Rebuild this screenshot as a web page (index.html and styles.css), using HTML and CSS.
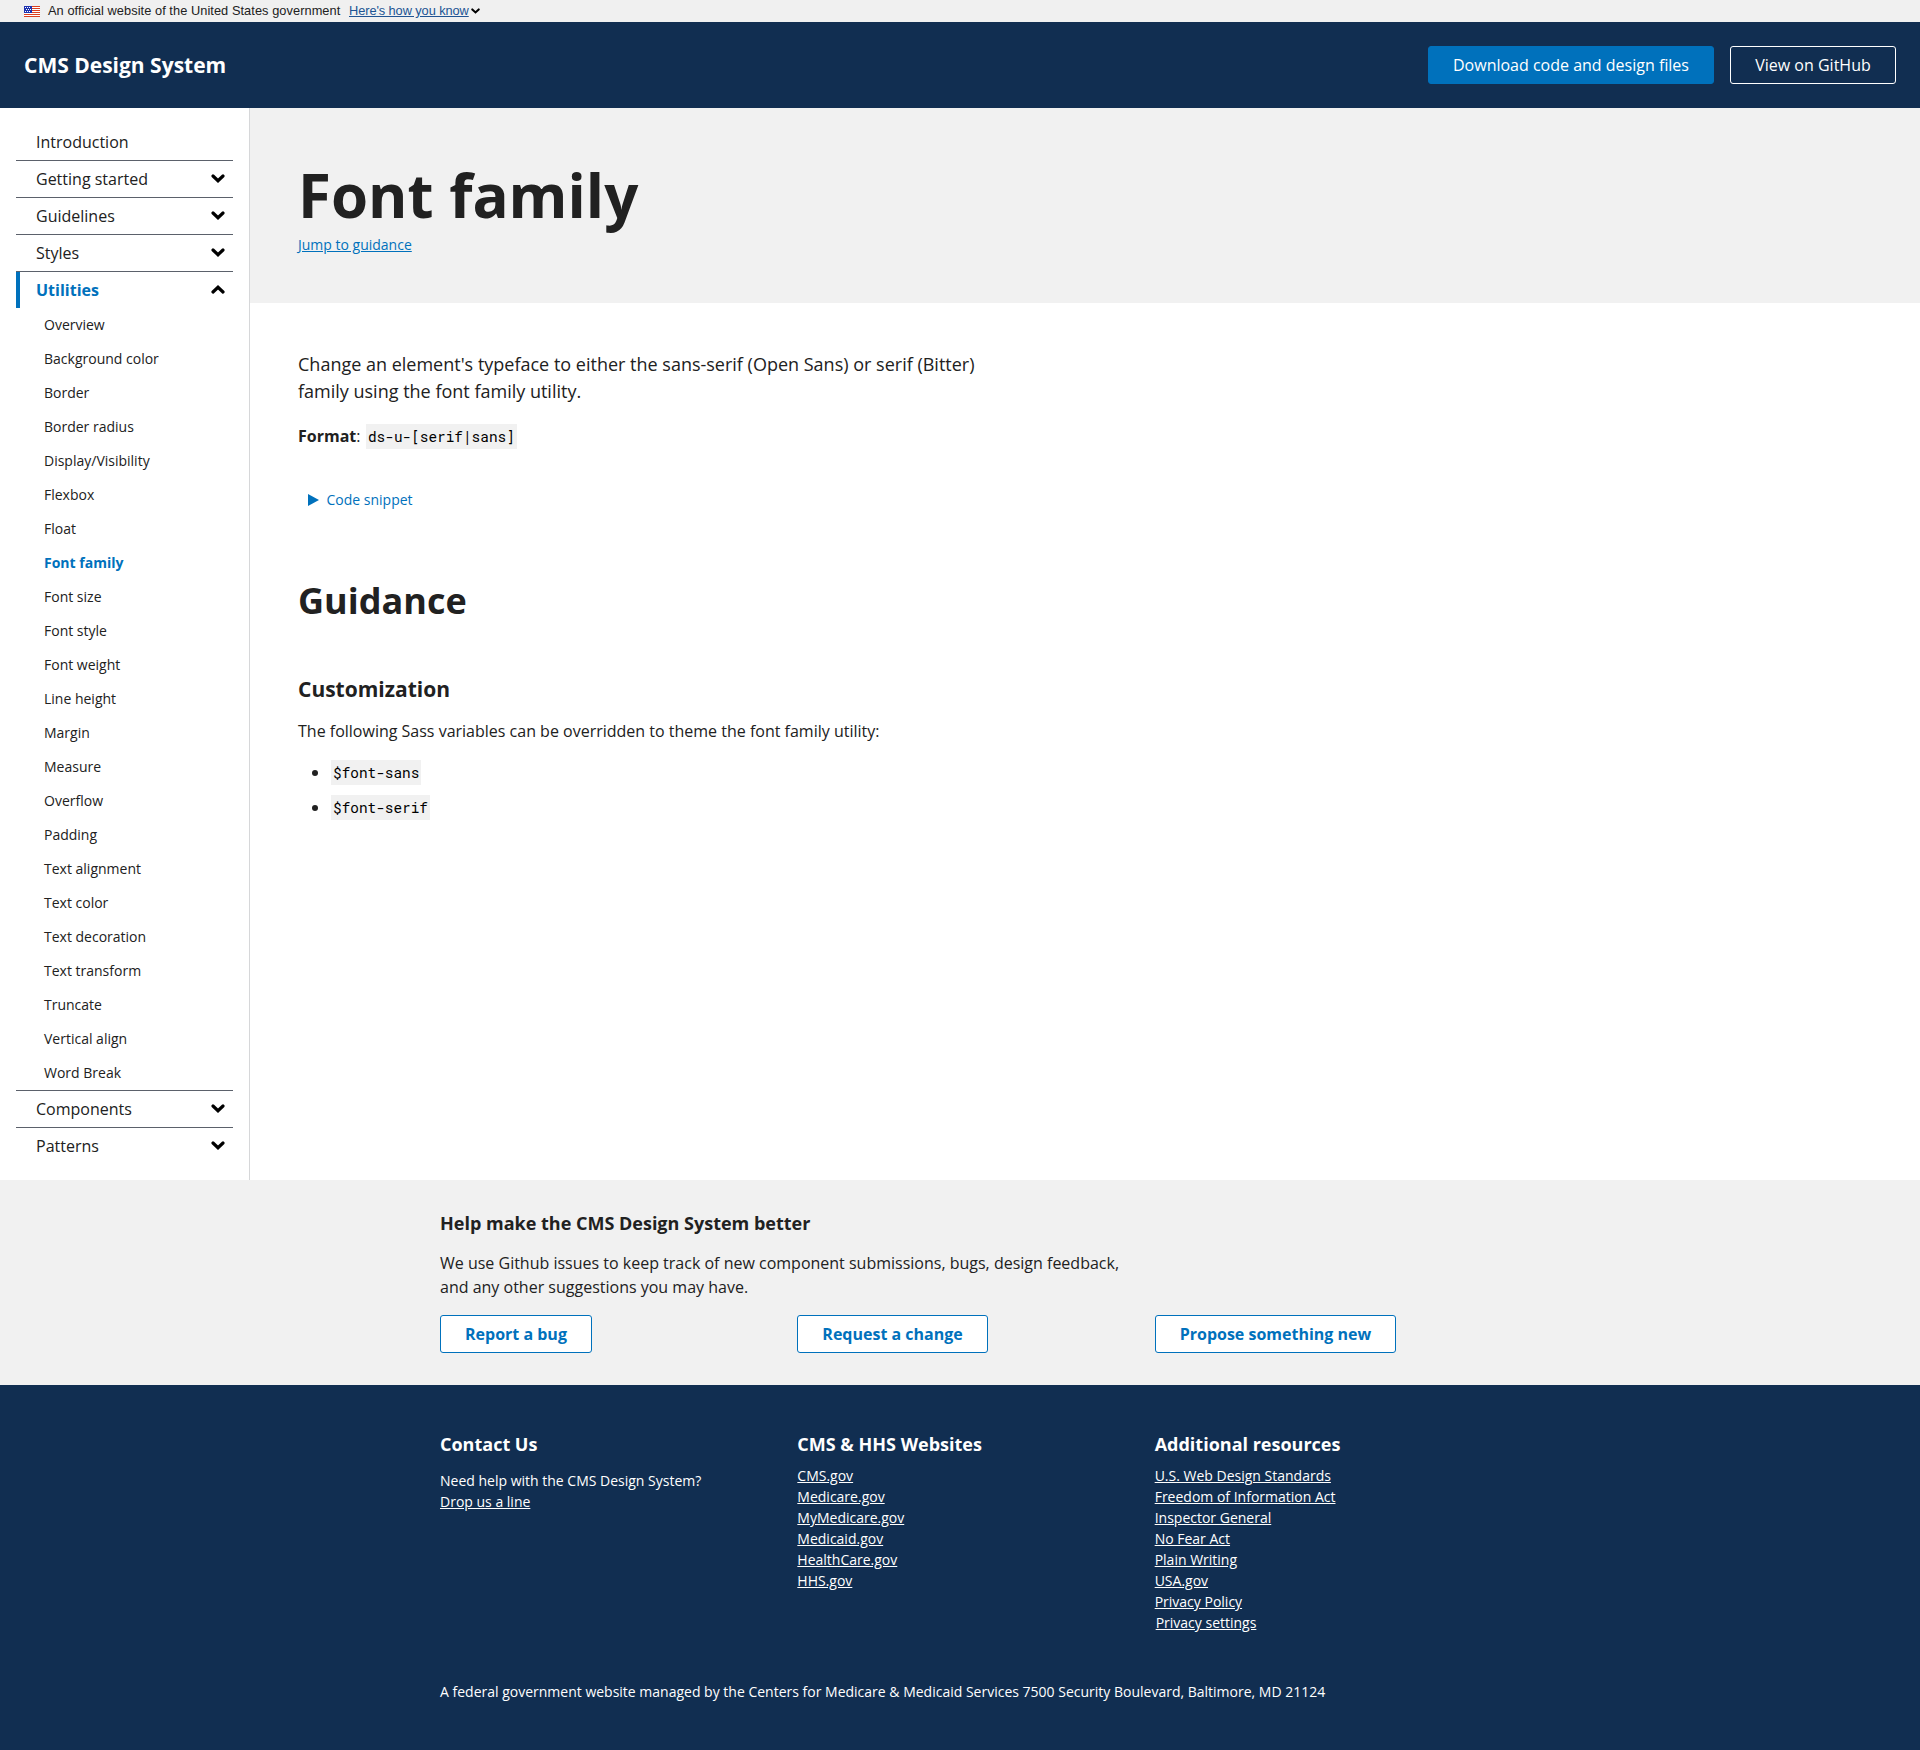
FILE: index.html
```html
<!DOCTYPE html>
<html lang="en">
<head>
<meta charset="utf-8">
<title>Font family - CMS Design System</title>
<link rel="stylesheet" href="styles.css">
</head>
<body>
<svg class="sprite" aria-hidden="true">
  <symbol id="chevron" viewBox="0 0 14 9"><path d="M2 2l5 4.7L12 2" fill="none" stroke="#000" stroke-width="3.2" stroke-linecap="round" stroke-linejoin="miter"/></symbol>
</svg>
<div class="banner">
  <svg class="flag" viewBox="0 0 16 11" shape-rendering="crispEdges">
    <path fill="#fff" d="M0 0h16v11H0z"/>
    <path fill="#db3e1f" d="M0 0h16v1H0zM0 2h16v1H0zM0 4h16v1H0zM0 6h16v1H0zM0 8h16v1H0zM0 10h16v1H0z"/>
    <path fill="#1e33b1" d="M0 0h8v7H0z"/>
    <path fill="#fff" d="M1 1h1v1H1zM3 1h1v1H3zM5 1h1v1H5zM2 3h1v1H2zM4 3h1v1H4zM6 3h1v1H6zM1 5h1v1H1zM3 5h1v1H3zM5 5h1v1H5z"/>
  </svg>
  <span class="banner-text">An official website of the United States government</span>
  <a class="banner-link" href="#">Here's how you know</a>
  <svg class="banner-chevron"><use href="#chevron"/></svg>
</div>
<header class="header">
  <a class="brand" href="#">CMS Design System</a>
  <div class="header-actions">
    <a class="button button-primary" href="#">Download code and design files</a>
    <a class="button button-inverse" href="#">View on GitHub</a>
  </div>
</header>
<div class="layout">
  <nav class="sidebar">
    <a class="nav-row" href="#">Introduction</a>
    <a class="nav-row" href="#">Getting started<svg class="chevron"><use href="#chevron"/></svg></a>
    <a class="nav-row" href="#">Guidelines<svg class="chevron"><use href="#chevron"/></svg></a>
    <a class="nav-row" href="#">Styles<svg class="chevron"><use href="#chevron"/></svg></a>
    <a class="nav-row current" href="#">Utilities<svg class="chevron up"><use href="#chevron"/></svg></a>
    <div class="subnav">
      <a href="#">Overview</a>
      <a href="#">Background color</a>
      <a href="#">Border</a>
      <a href="#">Border radius</a>
      <a href="#">Display/Visibility</a>
      <a href="#">Flexbox</a>
      <a href="#">Float</a>
      <a class="selected" href="#">Font family</a>
      <a href="#">Font size</a>
      <a href="#">Font style</a>
      <a href="#">Font weight</a>
      <a href="#">Line height</a>
      <a href="#">Margin</a>
      <a href="#">Measure</a>
      <a href="#">Overflow</a>
      <a href="#">Padding</a>
      <a href="#">Text alignment</a>
      <a href="#">Text color</a>
      <a href="#">Text decoration</a>
      <a href="#">Text transform</a>
      <a href="#">Truncate</a>
      <a href="#">Vertical align</a>
      <a href="#">Word Break</a>
    </div>
    <a class="nav-row" href="#">Components<svg class="chevron"><use href="#chevron"/></svg></a>
    <a class="nav-row" href="#">Patterns<svg class="chevron"><use href="#chevron"/></svg></a>
  </nav>
  <main class="main">
    <div class="hero">
      <h1>Font family</h1>
      <a href="#guidance">Jump to guidance</a>
    </div>
    <div class="content">
      <p class="lead">Change an element's typeface to either the sans-serif (Open Sans) or serif (Bitter) family using the font family utility.</p>
      <p class="format"><span><b>Format</b>:</span><code>ds-u-[serif|sans]</code></p>
      <a class="snippet" href="#"><svg class="triangle" viewBox="0 0 11 12"><path d="M0 0l11 6L0 12z" fill="#0071bc"/></svg>Code snippet</a>
      <h2 id="guidance">Guidance</h2>
      <h3>Customization</h3>
      <p class="body-text">The following Sass variables can be overridden to theme the font family utility:</p>
      <ul class="variables">
        <li><code>$font-sans</code></li>
        <li><code>$font-serif</code></li>
      </ul>
    </div>
  </main>
</div>
<section class="feedback">
  <h3>Help make the CMS Design System better</h3>
  <p>We use Github issues to keep track of new component submissions, bugs, design feedback, and any other suggestions you may have.</p>
  <div class="columns">
    <div><a class="button button-outline" href="#">Report a bug</a></div>
    <div><a class="button button-outline" href="#">Request a change</a></div>
    <div><a class="button button-outline" href="#">Propose something new</a></div>
  </div>
</section>
<footer class="footer">
  <div class="columns footer-columns">
    <div>
      <h3>Contact Us</h3>
      <p class="contact">Need help with the CMS Design System?<br><a href="#">Drop us a line</a></p>
    </div>
    <div>
      <h3>CMS &amp; HHS Websites</h3>
      <ul>
        <li><a href="#">CMS.gov</a></li>
        <li><a href="#">Medicare.gov</a></li>
        <li><a href="#">MyMedicare.gov</a></li>
        <li><a href="#">Medicaid.gov</a></li>
        <li><a href="#">HealthCare.gov</a></li>
        <li><a href="#">HHS.gov</a></li>
      </ul>
    </div>
    <div>
      <h3>Additional resources</h3>
      <ul>
        <li><a href="#">U.S. Web Design Standards</a></li>
        <li><a href="#">Freedom of Information Act</a></li>
        <li><a href="#">Inspector General</a></li>
        <li><a href="#">No Fear Act</a></li>
        <li><a href="#">Plain Writing</a></li>
        <li><a href="#">USA.gov</a></li>
        <li><a href="#">Privacy Policy</a></li>
        <li class="settings"><a href="#">Privacy settings</a></li>
      </ul>
    </div>
  </div>
  <p class="legal">A federal government website managed by the Centers for Medicare &amp; Medicaid Services 7500 Security Boulevard, Baltimore, MD 21124</p>
</footer>
</body>
</html>
```
FILE: styles.css
```css
* { box-sizing: border-box; }
body {
  margin: 0;
  background: #fff;
  color: #212121;
  font: 16px/24px "Open Sans", sans-serif;
}
h1, h2, h3, p, ul { margin: 0; padding: 0; }
h1, h2, h3 { font-weight: 700; line-height: 1.3; }
a { color: #0071bc; }
.sprite { display: none; }

.banner {
  display: flex;
  align-items: center;
  height: 22px;
  padding-left: 24px;
  background: #f0f0f0;
  font: 12.8px/22px "Liberation Sans", Arial, sans-serif;
}
.flag { width: 16px; height: 11px; margin-right: 8px; }
.banner-text { width: 301px; letter-spacing: 0.06px; white-space: nowrap; }
.banner-link { color: #205493; letter-spacing: -0.08px; }
.banner-chevron { width: 9px; height: 6px; margin: 0 0 0 2px; }

.header {
  display: flex;
  align-items: center;
  justify-content: space-between;
  height: 86px;
  padding: 0 24px;
  background: #112e51;
}
.brand { color: #fff; font-size: 21px; font-weight: 700; text-decoration: none; }
.header-actions { display: flex; gap: 16px; }
.button {
  display: inline-block;
  height: 38px;
  padding: 0 24px;
  border: 1px solid #0071bc;
  border-radius: 3px;
  line-height: 36px;
  text-align: center;
  text-decoration: none;
  white-space: nowrap;
}
.button-primary { min-width: 286px; background: #0071bc; color: #fff; }
.button-inverse { min-width: 166px; border-color: #fff; color: #fff; }
.button-outline { background: #fff; font-weight: 700; }

.layout { display: flex; height: 1072px; }
.sidebar { width: 250px; padding: 16px; border-right: 1px solid #d6d7d9; }
.nav-row {
  display: flex;
  align-items: center;
  justify-content: space-between;
  height: 37px;
  padding: 0 8px 0 20px;
  border-top: 1px solid #5b616b;
  color: #212121;
  text-decoration: none;
}
.nav-row:first-child { height: 36px; border-top: 0; }
.nav-row.current {
  background: linear-gradient(#0071bc, #0071bc) left / 4px 100% no-repeat;
  color: #0071bc;
  font-weight: 700;
}
.chevron { width: 14px; height: 9px; margin-bottom: 1px; }
.up { transform: rotate(180deg); }
.subnav a {
  display: block;
  height: 34px;
  padding-left: 28px;
  color: #212121;
  font-size: 14px;
  line-height: 34px;
  text-decoration: none;
}
.subnav .selected { color: #0071bc; font-weight: 700; }

.main { flex: 1; }
.hero { height: 195px; padding: 48px; background: #f1f1f1; }
.hero h1 { font-size: 60px; }
.hero a { display: block; width: max-content; font-size: 14px; line-height: 21px; }
.content { padding: 48px; }
.lead { max-width: 700px; font-size: 18px; line-height: 27px; }
.format { display: flex; align-items: flex-start; gap: 5.5px; margin-top: 19px; }
.format span { line-height: 24px; }
code {
  height: 25px;
  padding: 0 2px;
  background: #f1f1f1;
  color: #000;
  font: 14.4px/25px "Roboto Mono", "Liberation Mono", monospace;
}
.snippet {
  display: flex;
  align-items: center;
  gap: 8px;
  width: max-content;
  margin: 40px 0 0 9.5px;
  font-size: 14px;
  line-height: 21px;
  text-decoration: none;
}
.triangle { width: 11px; height: 12px; }
.content h2 { margin-top: 68px; font-size: 36px; }
.content h3 { margin-top: 51px; font-size: 21px; }
.body-text { margin-top: 16px; }
.variables { display: grid; gap: 10px; margin-top: 17px; list-style: none; }
.variables li { display: flex; align-items: center; gap: 13px; padding-left: 14px; }
.variables li::before { width: 6px; height: 6px; border-radius: 50%; background: #212121; content: ""; }

.feedback { height: 205px; padding: 32px 408px 0 440px; background: #f1f1f1; }
.feedback h3 { font-size: 18px; }
.feedback p { max-width: 700px; margin: 16px 0; }
.columns { display: grid; grid-template-columns: repeat(3, 1fr); }

.footer {
  height: 365px;
  padding: 48px 408px 0 440px;
  background: #112e51;
  color: #fff;
  font-size: 14px;
  line-height: 21px;
}
.footer a { color: #fff; }
.footer h3 { font-size: 18px; }
.footer ul { margin-top: 9px; list-style: none; }
.contact { margin-top: 14px; }
.settings { padding-left: 1px; }
.legal { margin-top: 48px; }
```
